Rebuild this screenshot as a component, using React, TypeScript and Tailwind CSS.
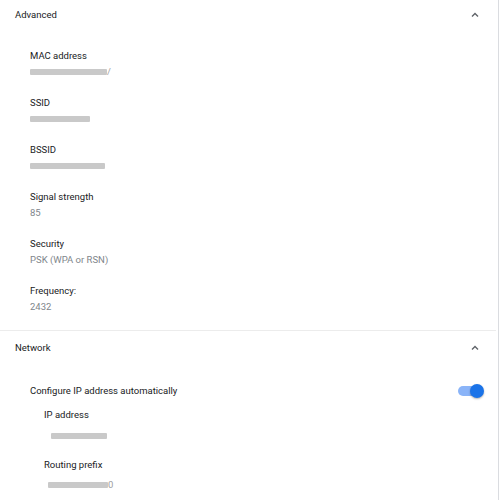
import React from "react";

const Chevron = () => (
  <svg width="10" height="10" viewBox="0 0 10 10" className="text-[#5f6368]">
    <path d="M2 6.5 L5 3.5 L8 6.5" fill="none" stroke="currentColor" strokeWidth="1.4" />
  </svg>
);

const Masked = ({ w, tail }: { w: number; tail?: string }) => (
  <span className="flex items-center">
    <span className="inline-block h-[6px] rounded-[1px] bg-[#c9c9c9]" style={{ width: w }} />
    {tail && <span className="text-[#9e9e9e]">{tail}</span>}
  </span>
);

const Item = ({ label, value }: { label: string; value: React.ReactNode }) => (
  <div className="pb-[16px]">
    <div className="h-[16px] leading-[16px] text-[#202124]">{label}</div>
    <div className="flex h-[15px] items-center leading-[15px] text-[#80868b]">{value}</div>
  </div>
);

export default function App() {
  return (
    <div className="h-[500px] w-[499px] overflow-hidden border-r border-[#dadce0] bg-white font-['Roboto',sans-serif] text-[9.5px]">
      <div className="flex h-[30px] items-center justify-between pl-[15px] pr-[18px] text-[#202124]">
        <span>Advanced</span>
        <Chevron />
      </div>
      <div className="pl-[30px] pt-[18px]">
        <Item label="MAC address" value={<Masked w={77} tail="/" />} />
        <Item label="SSID" value={<Masked w={60} />} />
        <Item label="BSSID" value={<Masked w={75} />} />
        <Item label="Signal strength" value="85" />
        <Item label="Security" value="PSK (WPA or RSN)" />
        <Item label="Frequency:" value="2432" />
      </div>
      <div className="mr-[2px] border-t border-[#ececec]" />
      <div className="flex h-[34px] items-center justify-between pl-[15px] pr-[18px] text-[#202124]">
        <span>Network</span>
        <Chevron />
      </div>
      <div className="pt-[14px]">
        <div className="flex h-[24px] items-center justify-between pl-[30px] pr-[14px] text-[#202124]">
          <span>Configure IP address automatically</span>
          <span className="relative flex h-[14px] w-[26px] items-center">
            <span className="h-[10px] w-[22px] rounded-full bg-[#8ab4f8]" />
            <span className="absolute right-0 h-[14px] w-[14px] rounded-full bg-[#1a73e8] shadow-[0_1px_2px_rgba(0,0,0,0.3)]" />
          </span>
        </div>
        <div className="pl-[44px] pt-[4px]">
          <div className="h-[16px] leading-[16px] text-[#202124]">IP address</div>
          <div className="mt-[5px] flex h-[16px] items-center pl-[7px]">
            <Masked w={56} />
          </div>
          <div className="mt-[13px] h-[16px] leading-[16px] text-[#202124]">Routing prefix</div>
          <div className="mt-[4px] flex h-[16px] items-center pl-[4px]">
            <Masked w={60} tail="0" />
          </div>
        </div>
      </div>
    </div>
  );
}
